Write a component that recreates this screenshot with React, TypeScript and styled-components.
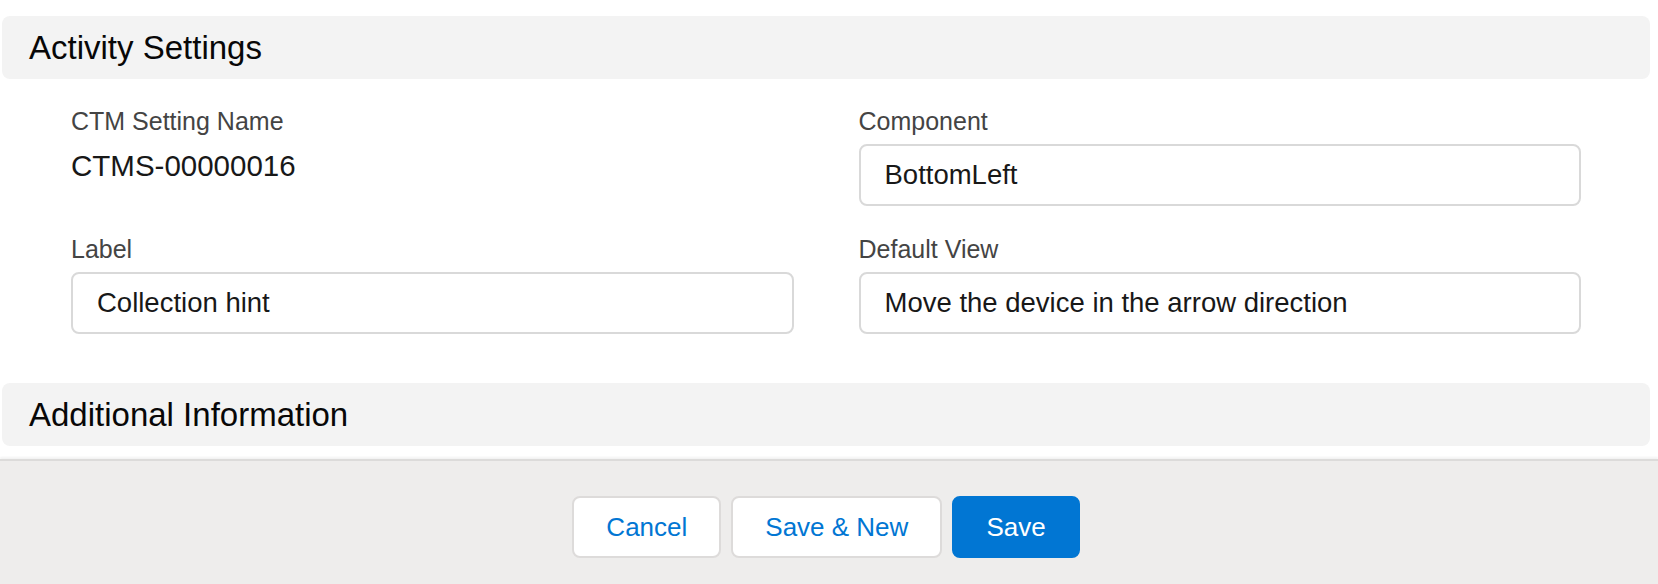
import React from "react";
import styled, { createGlobalStyle } from "styled-components";

const GlobalStyle = createGlobalStyle`
  html, body {
    margin: 0;
    padding: 0;
    background: #ffffff;
  }
  body {
    font-family: "Liberation Sans", Arial, sans-serif;
    color: #181818;
  }
`;

const Page = styled.div`
  display: flex;
  flex-direction: column;
  min-height: 100vh;
`;

const Sections = styled.div`
  padding: 0 8px 13px 2px;
`;

const SectionHeader = styled.h2`
  margin: 16px 0 0;
  height: 63px;
  display: flex;
  align-items: center;
  padding: 0 27px;
  background: #f3f3f3;
  border-radius: 8px;
  font-size: 33px;
  font-weight: 400;
  color: #080707;
`;

const FormGrid = styled.div`
  display: grid;
  grid-template-columns: 1fr 1fr;
  column-gap: 65px;
  row-gap: 27px;
  padding: 26px 69px 33px 69px;
`;

const Field = styled.div`
  display: flex;
  flex-direction: column;
`;

const FieldLabel = styled.label`
  font-size: 25px;
  line-height: 32px;
  color: #444444;
`;

const FieldValue = styled.div`
  margin-top: 11px;
  font-size: 29.5px;
  line-height: 36px;
  color: #181818;
`;

const TextInput = styled.input`
  margin-top: 7px;
  box-sizing: border-box;
  width: 100%;
  height: 62px;
  padding: 0 24px;
  border: 2px solid #d9d9d9;
  border-radius: 8px;
  background: #ffffff;
  font-family: "Liberation Sans", Arial, sans-serif;
  font-size: 27.5px;
  color: #181818;
  outline: none;
`;

const Footer = styled.div`
  flex: 1;
  display: flex;
  justify-content: center;
  align-items: flex-start;
  gap: 10px;
  padding: 35px 6px 0 0;
  background: #eeedec;
  border-top: 2px solid #dcdbda;
  box-shadow: 0 -2px 2px rgba(0, 0, 0, 0.05);
`;

const Button = styled.button<{ $brand?: boolean }>`
  height: 62px;
  padding: 0 32px;
  border: 2px solid ${(p) => (p.$brand ? "#0176d3" : "#dddbda")};
  border-radius: 8px;
  background: ${(p) => (p.$brand ? "#0176d3" : "#ffffff")};
  color: ${(p) => (p.$brand ? "#ffffff" : "#0176d3")};
  font-family: "Liberation Sans", Arial, sans-serif;
  font-size: 26px;
  cursor: pointer;
`;

export default function App() {
  return (
    <Page>
      <GlobalStyle />
      <Sections>
        <SectionHeader>Activity Settings</SectionHeader>
        <FormGrid>
          <Field>
            <FieldLabel>CTM Setting Name</FieldLabel>
            <FieldValue>CTMS-00000016</FieldValue>
          </Field>
          <Field>
            <FieldLabel>Component</FieldLabel>
            <TextInput readOnly value="BottomLeft" />
          </Field>
          <Field>
            <FieldLabel>Label</FieldLabel>
            <TextInput readOnly value="Collection hint" />
          </Field>
          <Field>
            <FieldLabel>Default View</FieldLabel>
            <TextInput readOnly value="Move the device in the arrow direction" />
          </Field>
        </FormGrid>
        <SectionHeader>Additional Information</SectionHeader>
      </Sections>
      <Footer>
        <Button>Cancel</Button>
        <Button>Save &amp; New</Button>
        <Button $brand>Save</Button>
      </Footer>
    </Page>
  );
}
